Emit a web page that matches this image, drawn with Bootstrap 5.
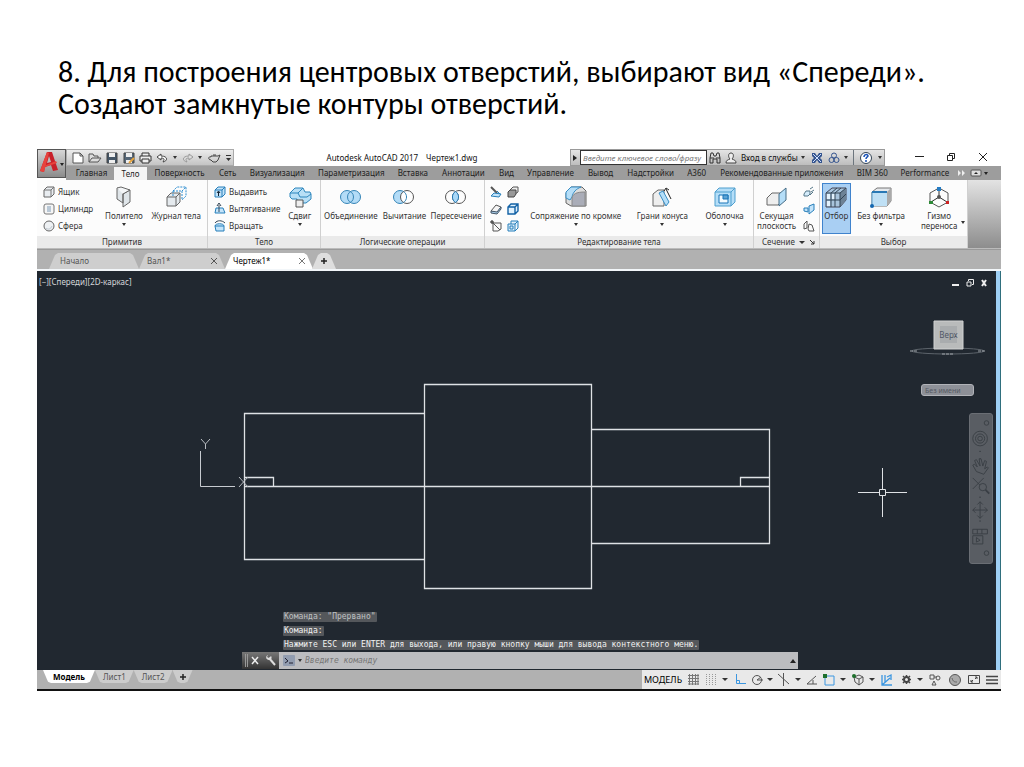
<!DOCTYPE html>
<html lang="ru">
<head>
<meta charset="utf-8">
<meta name="viewport" content="width=device-width, initial-scale=1">
<title>Построение центровых отверстий</title>
<link href="https://cdn.jsdelivr.net/npm/bootstrap@5.3.0/dist/css/bootstrap.min.css" rel="stylesheet">
<style>
body{background:#fff;color:#111;font-family:"Noto Sans","Open Sans",sans-serif;font-size:8px;line-height:10px}
.slide-title{font-family:Carlito,Calibri,"Open Sans",sans-serif;font-size:30px;line-height:32px;padding:56px 58px 0;margin:0 0 29px;font-weight:400;color:#000}
.app{margin:0 23px 0 37px}
button,input{font:inherit;color:inherit}
.app button{border:0;background:none;padding:0;line-height:10px}
svg{display:block;overflow:visible;fill:none}
.car{width:0;height:0;border:2px solid transparent;border-top:3px solid #333;border-bottom:0;display:block}
.car.big{border-width:3px 3px 0}
/* title bar */
.head{display:grid;grid-template-columns:29px minmax(0,1fr)}
.logo-btn{height:29px;background:linear-gradient(#d6d6d6,#8b8b8b)!important;border:1px solid #555!important;position:relative;z-index:1}
.titlebar{height:17px;display:grid;grid-template-columns:168fr 336fr 315fr 116fr;align-items:stretch}
.cells{display:grid;justify-items:center;align-items:center}
.quick{background:linear-gradient(#ececec,#c4c4c4);border:1px solid #aaa;grid-template-columns:16fr 17fr 17fr 17fr 17fr 16fr 10fr 15fr 10fr 18fr 10fr;padding-left:3px}
.svc{background:linear-gradient(#e4e4e4,#bdbdbd);border:1px solid #999;grid-template-columns:9fr 127fr 16fr 17fr 60fr 7fr 21fr 14fr 9fr 7fr 18fr 9fr}
.svc input{width:100%;height:15px;border:1px solid #333;font-style:italic;padding:0 2px;background:#fff;border-radius:0}
.svc input::placeholder,.cmd input::placeholder{color:#777;opacity:1}
.win{grid-template-columns:32fr 31fr 33fr;padding:0 1px 2px 18px}
.menu{height:14px;background:#9d9d9d;padding-left:3px;grid-template-columns:45fr 33fr 65fr 31fr 68fr 80fr 43fr 58fr 28fr 60fr 40fr 60fr 32fr 138fr 43fr 62fr 45fr;color:#1d1d1d}
.menu>*{min-width:0;white-space:nowrap}
.menu .on{background:#f4f4f4!important;align-self:end;justify-self:stretch;height:13px}
/* ribbon */
.ribbon{display:grid;grid-template-columns:171fr 113fr 164fr 269fr 66fr 148fr 33fr;height:69px;background:#fcfcfc;border-bottom:1px solid #bbb;color:#333}
.pane{min-width:0;border-right:1px solid #d0d0d0;display:flex;flex-direction:column}
.tools{flex:1;display:grid;min-height:0}
.cap{height:12px;background:#eaeaea;text-align:center;line-height:12px;white-space:nowrap}
.stack{display:grid;grid-template-rows:repeat(3,17px);padding-top:3px;align-items:center;min-width:0}
.stack button{display:flex;align-items:center;gap:3px;padding-left:6px;white-space:nowrap}
.pair{grid-template-columns:17px 17px;justify-content:start;justify-items:center;padding-left:2px}
.pair button,.solo button{padding-left:0}
.solo{justify-items:center}
.tool{display:flex;flex-direction:column;align-items:center;padding-top:3px!important;white-space:nowrap;min-width:0;margin-top:3px}
.tool svg{margin-bottom:3px}
.tool .car{margin-top:2px}
.tool.sel{background:#a9cff3!important;border:1px solid #3f83cd!important;margin:3px 0 2px 2px;padding-top:2px!important}
.ribbon-end{background:linear-gradient(#e3e3e3,#8d8d8d)}
/* drawing tabs */
.files{height:22px;background:#b1b1b1;border-top:1px solid #999;border-bottom:2px solid #f2f6f9;display:flex;padding:3px 0 0 12px;color:#555}
.app .ftab{display:flex;align-items:center;justify-content:space-between;padding:0 8px 0 11px;background:#cecece;clip-path:polygon(0 100%,6px 12%,9px 0,calc(100% - 9px) 0,calc(100% - 6px) 12%,100% 100%)}
.app .ftab.on{background:#fff;color:#000}
.app .ftab.plus{padding:0 8px;margin-left:-1px;background:#dedede}
/* canvas */
.canvas{position:relative;background:#212830;border-right:5px solid #9fd0f5}
.canvas::after{content:"";position:absolute;top:0;bottom:0;right:-5px;width:1px;background:#2f6f7d}
.ctl{position:absolute;right:9px;top:8px;display:flex;gap:7px}
.vlabel{position:absolute;left:2px;top:6px;color:#d4d6d9}
.cube{position:absolute;top:49px;right:10px;width:76px}
.wcs{position:absolute;top:113px;right:22px;width:53px;height:12px;border-radius:3px!important;background:#8d9097!important;border:1px solid #b1b3b8!important;color:#555a63!important;text-align:left;padding:0 3px!important;font-size:7px!important;line-height:9px!important}
.nav-strip{position:absolute;top:142px;right:3px;width:24px;height:151px;background:#595d63;border:1px solid #6a6e74;border-radius:3px}
.log{position:absolute;left:246px;bottom:20px;font-family:"DejaVu Sans Mono",monospace;color:#f0f0f0;display:flex;flex-direction:column;align-items:start;gap:4px;white-space:nowrap}
.log span{background:#54575b;padding:0 1px;border-radius:1px}
.log .old{color:#bfc1c3}
.cmd{position:absolute;left:205px;bottom:1px;width:58%;height:17px;background:#bcbdc0;display:flex;align-items:center;gap:3px;padding-right:2px}
.cmd .grip{background:linear-gradient(#777,#333);width:37px;height:17px;margin-right:1px}
.cmd input{flex:1;min-width:0;border:0;background:none;font-family:"DejaVu Sans Mono",monospace;font-style:italic;padding:0;outline:0}
/* status */
.status{height:21px;background:#b1b1b1;border-bottom:2px solid #111;display:grid;grid-template-columns:605fr 359fr}
.lay{display:flex;height:13px;padding-left:6px;color:#555}
.lay button{background:#ccc;padding:0 8px;clip-path:polygon(0 0,100% 0,calc(100% - 5px) 90%,calc(100% - 8px) 100%,8px 100%,5px 90%)}
.lay .on{background:#fff;color:#000;font-weight:700}
.modes{background:#e9e9e9;grid-template-columns:42fr 18fr 16fr 14fr 17fr 16fr 10fr 18fr 10fr 16fr 19fr 10fr 19fr 10fr 20fr 18fr 10fr 20fr 19fr 19fr 18fr}
.modes>*{min-width:0}
.modes .fs{font-size:9px;color:#000}
</style>
</head>
<body>
<svg width="0" height="0" class="position-absolute" aria-hidden="true">
<defs>
<g id="box"><path d="M1 4 4 1h7v7L8 11H1z" fill="#e9edf1" stroke="#666"/><path d="M1 4h7v7M8 4l3-3" stroke="#777"/></g>
<g id="bluebox"><path d="M1 4 4 1h7v7L8 11H1z" fill="#c4e4fa" stroke="#277fba"/><path d="M1 4h7v7M8 4l3-3" stroke="#277fba"/></g>
</defs>
</svg>
<main>
<h1 class="slide-title">8. Для построения центровых отверстий, выбирают вид «Спереди». Создают замкнутые контуры отверстий.</h1>
<section class="app">
<header class="head">
<button class="logo-btn" aria-label="Меню приложения"><svg width="27" height="27" viewBox="0 0 27 27"><path d="M2 21 9 2h5l6 18-5 1-2-6-6 2-1 5z" fill="#c8202a"/><path d="M9 13 11 6l2 6z" fill="#bdbdbd"/><path d="M2 21 9 2l2 1-5 19zM7 17l12-4-1-2-10 4z" fill="#e8433d"/><path d="M22 13h4l-2 3z" fill="#222"/></svg></button>
<div>
<div class="titlebar">
<div class="cells quick">
<button aria-label="Создать"><svg width="12" height="12" viewBox="0 0 12 12"><path d="M1 1h7l3 3v7H1zM8 1v3h3" fill="#fff" stroke="#555"/></svg></button>
<button aria-label="Открыть"><svg width="13" height="12" viewBox="0 0 13 12"><path d="M1 10V2h4l1 2h4v2M1 10l3-4h9l-3 4z" fill="#ddd" stroke="#555"/></svg></button>
<button aria-label="Сохранить"><svg width="12" height="12" viewBox="0 0 12 12"><path d="M1 1h10v10H1z" fill="#456" stroke="#444"/><path d="M3 1h6v4H3zM3 8h6v3H3z" fill="#eee"/></svg></button>
<button aria-label="Сохранить как"><svg width="12" height="12" viewBox="0 0 12 12"><path d="M1 1h10v10H1z" fill="#567" stroke="#444"/><path d="M3 1h6v4H3zM3 8h6v3H3z" fill="#eee"/><path d="m6 11 5-5" stroke="#e5a23c" stroke-width="2"/></svg></button>
<button aria-label="Печать"><svg width="13" height="12" viewBox="0 0 13 12"><path d="M3 4V1h7v3M3 9H1V4h11v5h-2M3 7h7v4H3z" fill="#eee" stroke="#333"/></svg></button>
<button aria-label="Отменить"><svg width="12" height="10" viewBox="0 0 12 10"><path d="M5 1 1 4l4 3V5c3 0 4 1 2 4 5-1 5-6-2-6z" fill="#fff" stroke="#444"/></svg></button>
<i class="car"></i>
<button aria-label="Повторить"><svg width="12" height="10" viewBox="0 0 12 10"><path d="m7 1 4 3-4 3V5C4 5 3 6 5 9 0 8 0 3 7 3z" fill="#ddd" stroke="#999"/></svg></button>
<i class="car"></i>
<button aria-label="Визуализация"><svg width="13" height="10" viewBox="0 0 13 10"><path d="M3 3h7l2-1-2 5-2 2H5L3 7C0 7 0 3 3 4zM5 2h3" stroke="#444"/></svg></button>
<svg width="5" height="6" viewBox="0 0 5 6"><path d="M0 0h5v1H0zM0 3h5L2.500 6z" fill="#333"/></svg>
</div>
<div class="d-flex align-items-center justify-content-center text-nowrap gap-2"><span>Autodesk AutoCAD 2017</span><span>Чертеж1.dwg</span></div>
<div class="cells svc">
<svg width="4" height="6" viewBox="0 0 4 6"><path d="M0 0v6l4-3z" fill="#222"/></svg>
<input type="text" aria-label="Поиск" placeholder="Введите ключевое слово/фразу">
<button aria-label="Найти"><svg width="12" height="12" viewBox="0 0 12 12"><path d="M1 11V6l1-5h2l1 3h2l1-3h2l1 5v5H8V7H4v4zM1 6h4M7 6h4" stroke="#333"/></svg></button>
<svg width="12" height="12" viewBox="0 0 12 12"><path d="M1 11c0-3 2-3 4-4-2-2-2-6 1-6s3 4 1 6c2 1 4 1 4 4z" fill="#eee" stroke="#444"/></svg>
<button class="text-nowrap">Вход в службы</button>
<i class="car"></i>
<button aria-label="Exchange"><svg width="12" height="12" viewBox="0 0 12 12"><path d="M1 1h3l2 3 2-3h3v3L9 6l2 2v3H8L6 8l-2 3H1V8l2-2-2-2z" fill="#34548f"/><path d="m2 2 8 8M10 2 2 10" stroke="#cfe0ff"/></svg></button>
<button aria-label="A360"><svg width="12" height="12" viewBox="0 0 12 12" stroke="#34548f"><circle cx="6" cy="3.500" r="2.500"/><circle cx="3.500" cy="8" r="2.500"/><circle cx="8.500" cy="8" r="2.500"/></svg></button>
<i class="car"></i>
<span class="border-start border-secondary h-100"></span>
<button aria-label="Справка"><svg width="12" height="12" viewBox="0 0 12 12"><circle cx="6" cy="6" r="5.500" fill="#fff" stroke="#345"/><path d="M4 5c0-3 4-3 4-1 0 1-2 1-2 3M6 8v2" stroke="#1750b5" stroke-width="1.500"/></svg></button>
<i class="car"></i>
</div>
<div class="cells win">
<button aria-label="Свернуть"><svg width="9" height="9" viewBox="0 0 9 9"><path d="M0 4.500h9" stroke="#222"/></svg></button>
<button aria-label="Восстановить"><svg width="8" height="8" viewBox="0 0 8 8"><path d="M2.500 2V.500h5v5H6M.5 2.500h5v5h-5z" stroke="#222"/></svg></button>
<button aria-label="Закрыть"><svg width="8" height="8" viewBox="0 0 8 8"><path d="m0 0 8 8M8 0 0 8" stroke="#222"/></svg></button>
</div>
</div>
<nav class="cells menu">
<button>Главная</button><button class="on">Тело</button><button>Поверхность</button><button>Сеть</button><button>Визуализация</button><button>Параметризация</button><button>Вставка</button><button>Аннотации</button><button>Вид</button><button>Управление</button><button>Вывод</button><button>Надстройки</button><button>A360</button><button>Рекомендованные приложения</button><button>BIM 360</button><button>Performance</button>
<svg width="34" height="8" viewBox="0 0 34 8"><path d="M-3 1v6l3-3zM1 1v6l3-3z" fill="#eee"/><rect x="10" y="1" width="10" height="6" rx="1" fill="#ddd" stroke="#555"/><path d="m13 5 2-2 2 2z" fill="#222"/><path d="M23 3h4l-2 3z" fill="#222"/></svg>
</nav>
</div>
</header>

<div class="ribbon">
<div class="pane"><div class="tools" style="grid-template-columns:66fr 43fr 62fr">
<div class="stack">
<button><svg width="12" height="12"><use href="#box"/></svg>Ящик</button>
<button><svg width="12" height="12" viewBox="0 0 12 12"><rect x="1" y="1" width="10" height="10" rx="2" fill="#f5f5f5" stroke="#777"/><path d="M4 3h4v6H4z" fill="#b9c8d6"/></svg>Цилиндр</button>
<button><svg width="12" height="12" viewBox="0 0 12 12"><circle cx="6" cy="6" r="5" fill="#eef1f4" stroke="#666"/><path d="M3 8c2 2 5 1 6-2" stroke="#bcc5ce"/></svg>Сфера</button>
</div>
<button class="tool"><svg width="22" height="22" viewBox="0 0 22 22"><path d="m4 2 6 3v12l-6-4zM10 8l7-4v12l-7 5z" fill="#dfe5e9" stroke="#666"/><path d="m4 2 4-1 9 3-7 4" fill="#f4f6f8" stroke="#666"/></svg>Политело<i class="car"></i></button>
<button class="tool"><svg width="22" height="22" viewBox="0 0 22 22"><path d="M2 11 6 7h9v9l-4 4H2z" fill="#e5eaee" stroke="#666"/><path d="M2 11h9v9M11 11l4-4" stroke="#666"/><path d="m8 5 4-4h9v9l-4 4M8 5h9v9M17 5l4-4M8 5v6" stroke="#2d8dd0" stroke-dasharray="2 1"/></svg>Журнал тела</button>
</div><div class="cap">Примитив</div></div>

<div class="pane"><div class="tools" style="grid-template-columns:72fr 41fr">
<div class="stack">
<button><svg width="12" height="12"><use href="#bluebox"/><path d="M4.500 10V6M3 7l1.500-2L6 7" stroke="#123"/></svg>Выдавить</button>
<button><svg width="12" height="12" viewBox="0 0 12 12"><path d="M2 5h7l2 5H1z" fill="#c4e4fa" stroke="#277fba"/><path d="M5 9V2M3 3l2-3 2 3" stroke="#345"/></svg>Вытягивание</button>
<button><svg width="12" height="12" viewBox="0 0 12 12"><path d="M1 6h9v5H2zM1 6c0-3 9-3 9 0" fill="#c4e4fa" stroke="#277fba"/><path d="M1 3c2-3 7-3 10 0" stroke="#345"/></svg>Вращать</button>
</div>
<button class="tool"><svg width="24" height="22" viewBox="0 0 24 22"><path d="M2 7 7 2h8l2 4h5l1 2v5l-5 4H9v-4H4l-2-2z" fill="#b8dff6" stroke="#2d86bd"/><path d="M2 7h8l2 4h7l4-3M10 7l5-5" stroke="#2d86bd"/><path d="M8 14h7v7H8z" fill="#eee" stroke="#555"/></svg>Сдвиг<i class="car"></i></button>
</div><div class="cap">Тело</div></div>

<div class="pane"><div class="tools" style="grid-template-columns:60fr 48fr 56fr">
<button class="tool"><svg width="24" height="22" viewBox="0 0 24 22"><circle cx="8" cy="11" r="6.500" fill="#b3dcf7"/><circle cx="15" cy="11" r="6.500" fill="#b3dcf7"/><g stroke="#3585b7"><circle cx="8" cy="11" r="6.500"/><circle cx="15" cy="11" r="6.500"/></g></svg>Объединение</button>
<button class="tool"><svg width="24" height="22" viewBox="0 0 24 22"><circle cx="8" cy="11" r="6.500" fill="#b3dcf7" stroke="#3585b7"/><circle cx="15" cy="11" r="6.500" fill="#fff" stroke="#555"/><path d="M11.500 5.500a6.500 6.500 0 0 1 0 11" stroke="#3585b7"/></svg>Вычитание</button>
<button class="tool"><svg width="24" height="22" viewBox="0 0 24 22"><circle cx="8" cy="11" r="6.500" stroke="#555"/><circle cx="15" cy="11" r="6.500" stroke="#555"/><path d="M11.500 5.500a6.500 6.500 0 0 1 0 11 6.500 6.500 0 0 1 0-11" fill="#a8d8f8" stroke="#2479b5"/></svg>Пересечение</button>
</div><div class="cap">Логические операции</div></div>

<div class="pane"><div class="tools" style="grid-template-columns:38fr 106fr 68fr 57fr">
<div class="stack pair">
<button aria-label="Разрез"><svg width="12" height="12" viewBox="0 0 12 12"><path d="m1 1 6 6" stroke="#555" stroke-width="2"/><path d="m1 10 3-3 7 1-2 3zM7 5l3 3" fill="#c4e4fa" stroke="#277fba"/></svg></button>
<button aria-label="Толщина"><svg width="12" height="12" viewBox="0 0 12 12"><path d="m3 4 3-3h5v5L8 8z" fill="#eee" stroke="#555"/><path d="M1 6 3 4h6v4l-2 3H1z" fill="#999" stroke="#444"/></svg></button>
<button aria-label="Взаимодействие"><svg width="12" height="12" viewBox="0 0 12 12"><path d="m1 8 5-6 5 2-4 6z" fill="#f5f5f5" stroke="#555"/><path d="M1 8v2l6 1 4-5V4L7 9z" fill="#a8cdea" stroke="#456"/></svg></button>
<button aria-label="Извлечь кромки"><svg width="12" height="12" viewBox="0 0 12 12"><path d="M1 4 4 1h7v7L8 11H1zM1 4h7v7M8 4l3-3" fill="#e0f1fd" stroke="#1261a5" stroke-width="1.400"/></svg></button>
<button aria-label="Клеймить"><svg width="12" height="12" viewBox="0 0 12 12"><path d="M3 3h8v6l-3 2H3zM3 3l7 7" fill="#fafafa" stroke="#555"/><path d="M0 2h4M2 0v4" stroke="#222"/></svg></button>
<button aria-label="Сдвиг грани"><svg width="12" height="12" viewBox="0 0 12 12"><path d="M4 1h7v7M1 4h7v7H1zM8 4l3-3M8 11l3-3M3 6h3v3H3zM4 1v3" fill="#dceffc" stroke="#277fba"/></svg></button>
</div>
<button class="tool"><svg width="22" height="22" viewBox="0 0 22 22"><path d="M1 7 6 1h11l4 4v15H6l-5-3z" fill="#ddd" stroke="#666"/><path d="M1 12V6l5-5h10c-5 2-8 5-9 10l-2 3z" fill="#b5def8" stroke="#388dc4"/><path d="M7 19v-7c1-4 4-6 13-6v14H7z" fill="#aaadb8" stroke="#888"/></svg>Сопряжение по кромке<i class="car"></i></button>
<button class="tool"><svg width="22" height="22" viewBox="0 0 22 22"><path d="m2 8 5-4h6v16H2z" fill="#eee" stroke="#666"/><path d="m8 7 4-2 6 11-3 4z" fill="#b5def8" stroke="#388dc4"/><path d="m20 13-5-10M13 5l2-3 3 2" stroke="#222"/></svg>Грани конуса<i class="car"></i></button>
<button class="tool"><svg width="22" height="22" viewBox="0 0 22 22"><path d="m1 6 4-4h16v14l-4 4H1z" fill="#b5def8" stroke="#4f9fce"/><path d="M1 6h16v14M17 6l4-4" stroke="#4f9fce"/><path d="M5 9h9v8H5z" fill="#f3fbff" stroke="#1874b8"/><path d="M9 9h5v4H9z" fill="#5da3d4" stroke="#1874b8"/></svg>Оболочка<i class="car"></i></button>
</div><div class="cap">Редактирование тела</div></div>

<div class="pane"><div class="tools" style="grid-template-columns:46fr 20fr">
<button class="tool"><svg width="22" height="22" viewBox="0 0 22 22"><path d="m1 12 5-5h10v8l-4 4H1z" fill="#eee" stroke="#666"/><path d="m13 8 7-6v12l-7 6z" fill="#b5def8" stroke="#456c86"/></svg>Секущая<br>плоскость</button>
<div class="stack solo">
<button aria-label="Псевдоразрез"><svg width="12" height="12" viewBox="0 0 12 12"><path d="m1 8 2-3h4v3l-2 2H1zM7 3l3-2M8 6l3-2M7 9l3-3" fill="#d5ecfb" stroke="#578"/></svg></button>
<button aria-label="Добавить изгиб"><svg width="12" height="12" viewBox="0 0 12 12"><path d="M1 8V5h4v4zM6 3l5-2v6l-5 4z" fill="#c4e4fa" stroke="#277fba"/></svg></button>
<button aria-label="Создать сечение"><svg width="12" height="12" viewBox="0 0 12 12"><path d="M1 9V4l3-3v7zM5 9l1-5 3 1 2 6H6z" fill="#fafafa" stroke="#555"/></svg></button>
</div>
</div><div class="cap d-flex align-items-center justify-content-between ps-2 pe-1">Сечение <i class="car big m-0"></i><svg width="5" height="5" viewBox="0 0 5 5"><path d="m0 0 4 4M4 1v3H1" stroke="#333"/></svg></div></div>

<div class="pane"><div class="tools" style="grid-template-columns:31fr 61fr 56fr">
<button class="tool sel"><svg width="22" height="22" viewBox="0 0 22 22"><path d="m1 7 6-5h14v12l-6 7H1z" fill="#a9c4dc" stroke="#445"/><path d="M15 7l6-5v12l-6 7z" fill="#6d8296"/><path d="M2 8h3v5H2zM7 8h3v5H7zM2 15h3v5H2z" fill="#e3f1fc"/><path d="M1 7h14v14M15 7l6-5M6 7v14M1 14h14l6-6M10 7v14M6 7l6-5M10 7l6-5" stroke="#345"/></svg>Отбор</button>
<button class="tool"><svg width="22" height="22" viewBox="0 0 22 22"><path d="m2 6 5-4h14v13l-4 5H2z" fill="#e6e9ec" stroke="#777"/><path d="M17 6v14l4-5V2z" fill="#aaa"/><path d="M2 6h15v14H2z" fill="#bfe0f5"/><path d="M2 20V6" stroke="#5b9cc9"/><path d="M2 6h15" stroke="#2878b5" stroke-width="2"/><circle cx="2" cy="20" r="2" fill="#1467b0"/></svg>Без фильтра<i class="car"></i></button>
<button class="tool"><svg width="22" height="22" viewBox="0 0 22 22"><path d="m11 2 9 5v9l-9 5-9-5V7z" stroke="#555"/><path d="M11 11V3M11 11l-8 5M11 11l8 5" stroke="#333"/><circle cx="11" cy="11" r="2" fill="#555"/><path d="M9 1h4v4H9z" fill="#247cc4"/><path d="M1 15h4v3H1z" fill="#2d8a37"/><path d="M18 15h3v3h-3z" fill="#c22"/></svg><span class="d-flex align-items-center gap-1"><span class="ps-2">Гизмо<br>переноса</span><i class="car"></i></span></button>
</div><div class="cap">Выбор</div></div>
<div class="ribbon-end"></div>
</div>

<div class="files">
<div class="ftab" style="flex:0 1 90px">Начало</div>
<div class="ftab" style="flex:0 1 86px;padding-left:8px">Вал1*<svg width="6" height="6" viewBox="0 0 6 6"><path d="m0 0 6 6M6 0 0 6" stroke="#555"/></svg></div>
<div class="ftab on" style="flex:0 1 88px;padding-left:8px">Чертеж1*<svg width="6" height="6" viewBox="0 0 6 6"><path d="m0 0 6 6M6 0 0 6" stroke="#777"/></svg></div>
<button class="ftab plus" aria-label="Новый чертеж"><svg width="8" height="8" viewBox="0 0 8 8"><path d="M4 1v6M1 4h6" stroke="#222" stroke-width="1.500"/></svg></button>
</div>

<div class="canvas">
<svg class="w-100" viewBox="0 0 959 399" role="img" aria-label="Вид спереди: ступенчатый вал">
<g stroke="#dfe2e5" stroke-width="1.300"><path d="M387.500 142.500h-180v146h180M387.500 113.500h167v204h-167zM554.500 158.500h178v114h-178M207.500 215.500h525"/><path d="M207.500 206.500h29v9M732.500 206.500h-29v9"/></g>
<path d="M163.500 180v35.500H198" stroke="#c7cbd0"/>
<path d="m164 168 4.500 5 4.500-5M168.500 173v5M202 206l9 10M211 206l-9 10" stroke="#b7bbc0"/>
<path d="M845.500 197v21M845.500 224v22M821 221.500h21M849 221.500h21M842.500 218.500h6v6h-6z" stroke="#dfe2e5"/>
</svg>
<div class="vlabel">[−][Спереди][2D-каркас]</div>
<div class="ctl">
<button aria-label="Свернуть вид"><svg width="7" height="8" viewBox="0 0 7 8"><path d="M0 6h7" stroke="#eee" stroke-width="2"/></svg></button>
<button aria-label="Развернуть вид"><svg width="8" height="8" viewBox="0 0 8 8"><path d="M2.500 2V.500h5v5H6M1 3h4v4H1z" stroke="#eee"/></svg></button>
<button aria-label="Закрыть вид"><svg width="6" height="8" viewBox="0 0 6 8"><path d="m1 1 4 6M5 1 1 7" stroke="#eee" stroke-width="2"/></svg></button>
</div>
<svg class="cube" viewBox="0 0 76 36"><ellipse cx="38" cy="31" rx="36" ry="3" stroke="#5d646b"/><path d="M0 31h8M68 31h8M32 34h12" stroke="#a1a6ab" stroke-dasharray="3 1"/><path d="M24 1h29v28H24z" fill="#b9bbbb" stroke="#d1d2d2"/><path d="M30 6h17v17H30z" fill="#a9acae"/><text x="38.500" y="18" font-size="8" text-anchor="middle" fill="#515866">Верх</text></svg>
<button class="wcs">Без имени</button>
<svg class="nav-strip" viewBox="0 0 24 151" stroke="#393e44"><circle cx="18" cy="4" r="2.500"/><circle cx="18" cy="146" r="2.500"/><circle cx="11" cy="21" r="8"/><circle cx="11" cy="21" r="5"/><circle cx="11" cy="21" r="2.500"/><path d="m7 57-4-7 2-1 3 3-3-7 2-1 4 7-1-8h2l2 8 2-6 2 1-2 8 3-2 1 1-5 7zM3 64l12 12M15 64 3 76"/><circle cx="14" cy="74" r="4" fill="#595d63"/><path d="m17 77 4 4" stroke-width="2"/><path d="M11 90v18M3 99h16M8 93l3-3 3 3M8 105l3 3 3-3M6 96l-3 3 3 3M16 96l3 3-3 3"/><path d="M3 120h16v5H3zM8 120v5M13 120v5M3 127h11v9H3zM7 129v5l4-2zM10 35h2M10 85h2M10 111h2"/></svg>
<div class="log"><span class="old">Команда: "Прервано"</span><span>Команда:</span><span>Нажмите ESC или ENTER для выхода, или правую кнопку мыши для вывода контекстного меню.</span></div>
<div class="cmd"><svg class="grip" viewBox="0 0 37 17"><path d="M3.500 2v13M5.500 2v13" stroke="#999"/><path d="m10 5 6 7M16 5l-6 7" stroke="#eee" stroke-width="1.500"/><path d="m27 6 6 7" stroke="#ddd" stroke-width="2"/><path d="M26 3c-3 1-2 5 1 5s3-3 2-4l-2 2-2-1z" fill="#ddd"/></svg>
<svg width="12" height="11" viewBox="0 0 12 11"><rect width="12" height="11" rx="1" fill="#929db0"/><path d="m2 3 3 3-3 2M6 8h4" stroke="#223"/></svg><i class="car"></i>
<input type="text" aria-label="Командная строка" placeholder="Введите команду"><svg width="6" height="4" viewBox="0 0 6 4"><path d="m0 4 3-4 3 4z" fill="#222"/></svg></div>
</div>

<footer class="status">
<div class="lay"><button class="on" style="padding:0 10px">Модель</button><button>Лист1</button><button>Лист2</button><button aria-label="Новый лист" style="padding:0 7px"><svg width="6" height="6" viewBox="0 0 6 6"><path d="M3 0v6M0 3h6" stroke="#222" stroke-width="1.500"/></svg></button></div>
<div class="cells modes">
<button class="fs">МОДЕЛЬ</button>
<svg width="11" height="11" viewBox="0 0 11 11"><path d="M1.500 0v11M4.500 0v11M7.500 0v11M10 0v11M0 1.500h11M0 4.500h11M0 7.500h11M0 10h11" stroke="#777"/></svg>
<svg width="11" height="11" viewBox="0 0 11 11"><path d="M1.500 0v11M4.500 0v11M7.500 0v11M10.500 0v11" stroke="#999" stroke-dasharray="1 1"/></svg>
<i class="car big"></i>
<svg width="11" height="11" viewBox="0 0 11 11"><path d="M1.500 0v9.500H11M1.500 6.500h3v3" stroke="#3b96e0"/></svg>
<svg width="11" height="11" viewBox="0 0 11 11"><circle cx="5" cy="6" r="4.500" stroke="#555"/><path d="M5 6h6M9 3l-4 3" stroke="#555"/></svg>
<i class="car big"></i>
<svg width="12" height="13" viewBox="0 0 12 13"><path d="m0 1 11 10M5.500 0v13" stroke="#555"/></svg>
<i class="car big"></i>
<svg width="11" height="10" viewBox="0 0 11 10"><path d="M10 1 1 9h10M7 5v4" stroke="#555"/></svg>
<svg width="12" height="12" viewBox="0 0 12 12"><path d="M2 2h9v9H2z" stroke="#3b96e0"/><path d="M0 0h4v4H0z" fill="#1d702b"/></svg>
<i class="car big"></i>
<svg width="12" height="12" viewBox="0 0 12 12"><path d="m2 3 5-2 4 2v5l-4 3-4-3zM2 3l5 2 4-2M7 5v6" stroke="#555"/><circle cx="2" cy="2" r="2" fill="#1d702b"/></svg>
<i class="car big"></i>
<svg width="12" height="12" viewBox="0 0 12 12"><path d="M1 1v10h10M1 11l8-7M6 3l4-2v5M4 1v7" stroke="#3b96e0" stroke-width="1.300"/></svg>
<svg width="9" height="9" viewBox="0 0 9 9"><circle cx="4.500" cy="4.500" r="2.500" stroke="#444" stroke-width="2"/><path d="M4.500 0v2M4.500 7v2M0 4.500h2M7 4.500h2M1 1l1 1M8 1 7 2M1 8l1-1M8 8 7 7" stroke="#444" stroke-width="1.500"/></svg>
<i class="car big"></i>
<svg width="12" height="12" viewBox="0 0 12 12"><path d="M1 1h4v4H1zM5 3h3M3 11l2-4 2 4z" stroke="#555"/><circle cx="9" cy="4" r="2" stroke="#555"/></svg>
<svg width="12" height="12" viewBox="0 0 12 12"><circle cx="6" cy="6" r="5.500" fill="#aaa" stroke="#555"/><path d="M3 4c1 4 3 4 5 4" stroke="#666"/></svg>
<svg width="12" height="10" viewBox="0 0 12 10"><path d="M.5.500h11v8H.5zM3 5v2h2M7 2h2v2M3 7l2-2M9 2 7 4" stroke="#444"/></svg>
<svg width="12" height="10" viewBox="0 0 12 10"><path d="M0 1.500h12M0 5h12M0 8.500h12" stroke="#444" stroke-width="1.300"/></svg>
</div>
</footer>
</section>
</main>
<script src="https://cdn.jsdelivr.net/npm/bootstrap@5.3.0/dist/js/bootstrap.bundle.min.js"></script>
</body>
</html>
